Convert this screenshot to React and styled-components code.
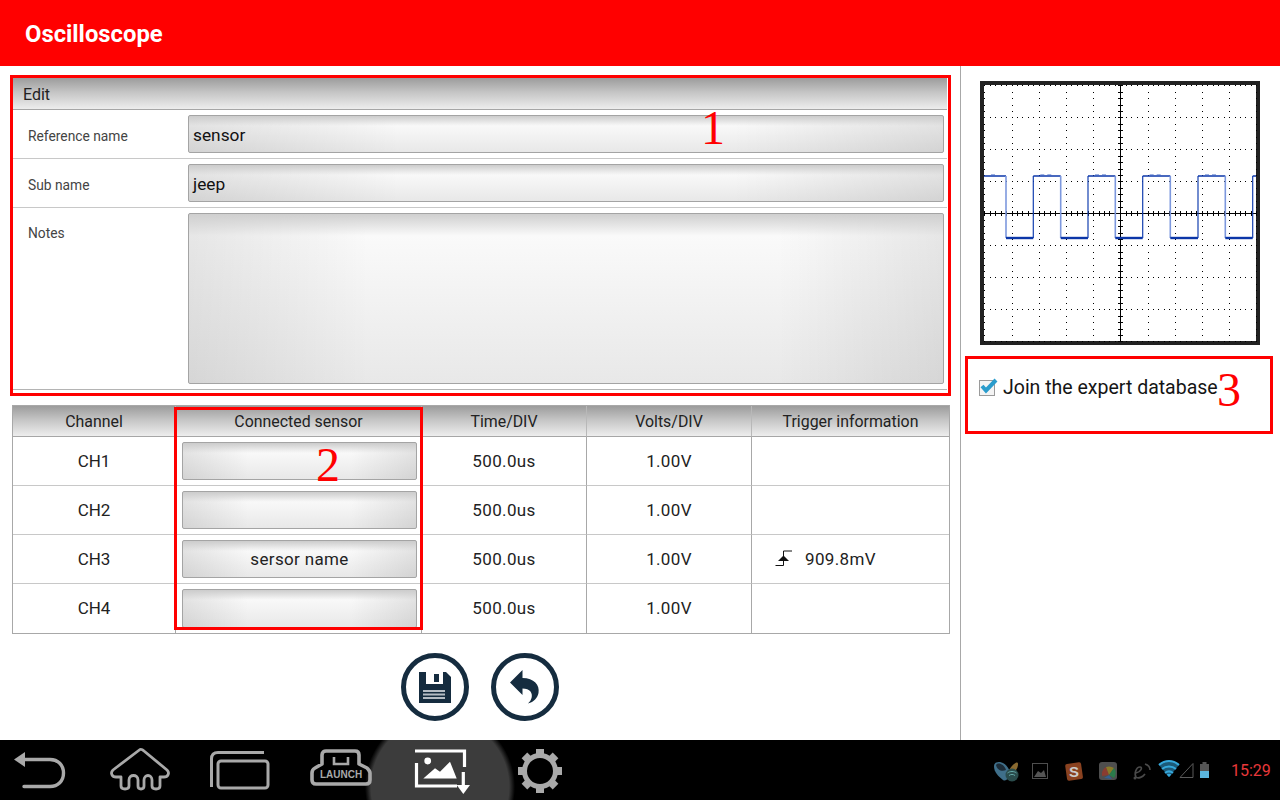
import React from 'react'
import styled, { createGlobalStyle } from 'styled-components'

const Global = createGlobalStyle`
  html, body { margin: 0; padding: 0; background: #fff; }
  body { font-family: Roboto, "Liberation Sans", sans-serif; }
`

const Screen = styled.div`
  position: relative;
  width: 1280px;
  height: 800px;
  display: flex;
  flex-direction: column;
  overflow: hidden;
  background: #fff;
`

const Header = styled.header`
  height: 66px;
  background: #ff0000;
  color: #fff;
  font-size: 23.8px;
  font-weight: 700;
  line-height: 69px;
  padding-left: 25px;
  flex: none;
`

const Main = styled.div`
  flex: 1;
  display: flex;
  min-height: 0;
`

const LeftPane = styled.div`
  box-sizing: border-box;
  padding: 12px 10px 0 12px;
  border-right: 1px solid #a8a8a8;
  flex: none;
  width: 961px;
`

const RightPane = styled.div`
  flex: 1;
  padding: 15px 0 0 19px;
`

const sectionHead = `
  background: linear-gradient(#9c9c9c, #c4c4c4 45%, #ededed);
  color: #222;
`

const EditPanel = styled.section`
  width: 934px;
  margin-left: 1px;
  border-bottom: 1px solid #b4b4b4;
  height: 312px;
  display: flex;
  flex-direction: column;
  box-sizing: border-box;
`

const EditHead = styled.div`
  ${sectionHead}
  height: 32px;
  box-sizing: border-box;
  border-bottom: 1px solid #a6a6a6;
  font-size: 16px;
  line-height: 33px;
  padding-left: 10px;
  flex: none;
`

const FormRow = styled.div`
  display: flex;
  height: ${p => p.$h}px;
  flex: ${p => (p.$grow ? 1 : 'none')};
  box-sizing: border-box;
  padding: 5px 3px 5px 15px;
  border-bottom: ${p => (p.$grow ? 'none' : '1px solid #c8c8c8')};
`

const Label = styled.label`
  width: 160px;
  flex: none;
  font-size: 13.8px;
  color: #444;
  line-height: ${p => (p.$top ? '40px' : '42px')};
`

const Field = styled.div`
  flex: 1;
  box-sizing: border-box;
  border: 1px solid #a4a4a4;
  border-radius: 2px;
  background:
    linear-gradient(#cccccc, rgba(204, 204, 204, 0) 10px),
    linear-gradient(90deg, rgba(0, 0, 0, 0.09), rgba(0, 0, 0, 0) 28%, rgba(0, 0, 0, 0) 72%, rgba(0, 0, 0, 0.09)),
    linear-gradient(#fafafa 20%, #e8e8e8);
  color: #111;
  font-size: 17.3px;
  line-height: 38px;
  padding-left: 4px;
`

const NotesField = styled(Field)`
  background:
    linear-gradient(#cfcfcf, rgba(207, 207, 207, 0) 22px),
    linear-gradient(90deg, rgba(0, 0, 0, 0.08), rgba(0, 0, 0, 0) 24%, rgba(0, 0, 0, 0) 78%, rgba(0, 0, 0, 0.08)),
    linear-gradient(#fafafa 12%, #e8e8e8);
`

const Table = styled.div`
  width: 938px;
  margin-top: 15px;
  box-sizing: border-box;
  border: 1px solid #a8a8a8;
  display: grid;
  grid-template-columns: 163px 246px 165px 165px 1fr;
  color: #222;
`

const HeadCell = styled.div`
  ${sectionHead}
  height: 31px;
  box-sizing: border-box;
  border-bottom: 1px solid #a6a6a6;
  border-right: ${p => (p.$last ? 'none' : '1px solid #b8b8b8')};
  font-size: 15.9px;
  line-height: 31px;
  text-align: center;
`

const Cell = styled.div`
  height: 49px;
  box-sizing: border-box;
  border-bottom: ${p => (p.$end ? 'none' : '1px solid #c8c8c8')};
  border-right: ${p => (p.$last ? 'none' : '1px solid #a8a8a8')};
  font-size: 17px;
  letter-spacing: 0.35px;
  display: flex;
  align-items: center;
  justify-content: ${p => (p.$last ? 'flex-start' : 'center')};
  padding-left: ${p => (p.$last ? '23px' : '0')};
  padding-bottom: 1px;
`

const ChannelCell = styled(Cell)`
  letter-spacing: 0;
`

const SensorCell = styled(Cell)`
  padding: 5px 4px 5px 6px;
  align-items: stretch;
`

const SensorField = styled(Field)`
  font-size: 17px;
  letter-spacing: 0.35px;
  line-height: 36px;
  color: #222;
  text-align: center;
  padding: 0;
`

const TriggerText = styled.span`
  margin-left: 12px;
`

const Actions = styled.div`
  display: flex;
  justify-content: center;
  gap: 22px;
  margin-top: 19px;
  padding-right: 2px;
`

const RoundButton = styled.button`
  width: 68px;
  height: 68px;
  box-sizing: border-box;
  border: 5px solid #152c3f;
  border-radius: 50%;
  background: #fff;
  padding: 0;
  display: flex;
  align-items: center;
  justify-content: center;
`

const Scope = styled.svg`
  display: block;
  width: 280px;
  height: 264px;
`

const JoinRow = styled.div`
  display: flex;
  align-items: center;
  margin-top: 30px;
  margin-left: -2px;
  height: 24px;
  font-size: 19.5px;
  color: #151515;
`

const Check = styled.svg`
  width: 22px;
  height: 22px;
  margin-right: 3px;
  flex: none;
`

const NavBar = styled.nav`
  height: 60px;
  flex: none;
  display: flex;
  align-items: flex-start;
  background:
    radial-gradient(circle 75px at 440px 47px, #3c3c3c 0 69px, rgba(60, 60, 60, 0) 75px),
    #000;
`

const NavIcon = styled.svg`
  display: block;
  flex: none;
  margin-left: ${p => p.$gap}px;
  width: ${p => p.$w}px;
  height: 60px;
`

const Tray = styled.svg`
  display: block;
  flex: none;
  margin-left: 430px;
  width: 220px;
  height: 60px;
`

const Clock = styled.div`
  flex: none;
  margin-left: 17px;
  color: #e8383a;
  font-size: 16px;
  line-height: 61px;
`

const RedBox = styled.div`
  position: absolute;
  box-sizing: border-box;
  border: 3.5px solid #ff0000;
  left: ${p => p.$x}px;
  top: ${p => p.$y}px;
  width: ${p => p.$w}px;
  height: ${p => p.$h}px;
`

const Mark = styled.div`
  position: absolute;
  left: ${p => p.$x}px;
  top: ${p => p.$y}px;
  color: #ff0000;
  font-family: "Liberation Serif", serif;
  font-size: 48px;
  line-height: 50px;
`

const DIVX = 27.2
const DIVY = 32
const CX = 140.3
const CY = 132.3

function ScopeChart() {
  const dots = []
  // dotted graticule, five dots per division
  for (let i = -5; i <= 5; i++) {
    if (i === 0) continue
    for (let j = 0; j <= 40; j++) {
      dots.push([CX + i * DIVX, CY - 128 + j * 6.4])
    }
  }
  for (let i = -4; i <= 4; i++) {
    if (i === 0) continue
    for (let j = 0; j <= 50; j++) {
      dots.push([CX - 136 + j * 5.44, CY + i * DIVY])
    }
  }
  const ticksX = []
  for (let j = 0; j <= 50; j++) ticksX.push(CX - 136 + j * 5.44)
  const ticksY = []
  for (let j = 0; j <= 40; j++) ticksY.push(CY - 128 + j * 6.4)

  const hi = 95
  const lo = 157
  const edges = [26, 53.3, 80.7, 108, 135.3, 162.7, 190.3, 218, 245.3, 272.7]
  const segs = []
  let x0 = 4
  edges.forEach((x, i) => {
    const y = i % 2 === 0 ? hi : lo
    segs.push(<line key={'h' + i} x1={x0} y1={y} x2={x} y2={y} stroke="#0b36a8" strokeWidth={y === lo ? 2.4 : 1.5} />)
    // the flat tops carry a little noise
    if (y === hi) {
      segs.push(<line key={'n' + i} x1={x0 + 7} y1={hi - 1} x2={x - 9} y2={hi - 1} stroke="#3f64c4" strokeWidth="1" strokeDasharray="4 3" />)
    }
    segs.push(
      <line
        key={'v' + i}
        x1={x}
        y1={hi}
        x2={x}
        y2={lo}
        stroke={i % 2 === 0 ? '#7d98de' : '#1440b0'}
        strokeWidth={i % 2 === 0 ? 1.6 : 1.2}
      />
    )
    x0 = x
  })
  segs.push(<line key="tail" x1={x0} y1={hi} x2={276} y2={hi} stroke="#0b36a8" strokeWidth="1.5" />)

  return (
    <Scope viewBox="0 0 280 264">
      <rect x="2" y="2" width="276" height="260" fill="#fff" stroke="#222" strokeWidth="4" />
      {dots.map(([x, y], i) => (
        <rect key={i} x={Math.round(x)} y={Math.round(y)} width="1" height="1" fill="#000" />
      ))}
      <rect x="4" y="132" width="272" height="1" fill="#000" />
      <rect x="140" y="4" width="1" height="256" fill="#000" />
      {ticksX.map(x => (
        <rect key={x} x={Math.round(x)} y="130" width="1" height="5" fill="#000" />
      ))}
      {ticksY.map(y => (
        <rect key={y} x="138" y={Math.round(y)} width="5" height="1" fill="#000" />
      ))}
      {segs}
    </Scope>
  )
}

const rows = [
  { ch: 'CH1', sensor: '' },
  { ch: 'CH2', sensor: '' },
  { ch: 'CH3', sensor: 'sersor name', trigger: '909.8mV' },
  { ch: 'CH4', sensor: '' },
]

function TriggerIcon() {
  return (
    <svg width="18" height="17" viewBox="0 0 18 17">
      <path d="M0.5 15.5H8.5V1H17" fill="none" stroke="#111" strokeWidth="1" />
      <path d="M3 11L8.5 5.5L14 11Z" fill="#111" />
    </svg>
  )
}

function NavIcons() {
  const grey = '#a9a9a9'
  return (
    <>
      <NavIcon $gap={12} $w={56} viewBox="0 0 56 60">
        <path d="M2 19.5L13 12V27Z" fill={grey} />
        <path d="M12 19.5H38C46 19.5 51.5 25 51.5 33S46 46.5 38 46.5H12" fill="none" stroke={grey} strokeWidth="3.4" strokeLinecap="round" />
      </NavIcon>
      <NavIcon $gap={40} $w={64} viewBox="0 0 64 60">
        <path
          d="M32 9.5L5 30C2 33 4 37 8 37H13V46C13 50 21 50 21 46V40C21 34 30 34 30 40V46C30 50 36 50 36 46V40C36 34 44 34 44 40V46C44 50 52 50 52 46V37H56C60 37 62 33 59 30L36 11C34.500 9.500 33.500 9 32 9.500Z"
          fill="none"
          stroke={grey}
          strokeWidth="2.8"
          strokeLinejoin="round"
        />
      </NavIcon>
      <NavIcon $gap={37} $w={62} viewBox="0 0 62 60">
        <path d="M2.500 47V19C2.500 14.500 5 12.500 9 12.500H55" fill="none" stroke={grey} strokeWidth="3" />
        <rect x="9" y="21" width="50" height="27" rx="3" fill="none" stroke={grey} strokeWidth="3" />
      </NavIcon>
      <NavIcon $gap={39} $w={62} viewBox="0 0 62 60">
        <path
          d="M12 24V15C12 12 14 11 16 11H45C48 11 49 13 49 15V24L57 28C59 30 60 31 60 33V40C60 43 58 44 56 44H6C3 44 2 42 2 40V33C2 31 3 29 5 28Z"
          fill="none"
          stroke={grey}
          strokeWidth="3.6"
          strokeLinejoin="round"
        />
        <path d="M24 17V24H38V17" fill="none" stroke={grey} strokeWidth="2.6" />
        <text x="31" y="38" fontFamily="Liberation Sans, sans-serif" fontSize="10" fontWeight="700" textAnchor="middle" fill={grey}>LAUNCH</text>
      </NavIcon>
      <NavIcon $gap={42} $w={58} viewBox="0 0 58 60">
        <path d="M2.500 23V46H43M1 11H50.500V27" fill="none" stroke="#fff" strokeWidth="3.2" />
        <circle cx="13.700" cy="21" r="3.400" fill="#fff" />
        <path d="M9.300 38.500L21 28.300L26 31.700L36 21.700L42.700 38.500Z" fill="#fff" />
        <path d="M49.300 32V46" stroke="#fff" strokeWidth="3.200" />
        <path d="M42.700 45H56L49.300 54Z" fill="#fff" />
      </NavIcon>
      <NavIcon $gap={44} $w={48} viewBox="0 0 48 60">
        <circle cx="24" cy="31" r="15.500" fill="none" stroke={grey} strokeWidth="5" />
        {[0, 45, 90, 135, 180, 225, 270, 315].map(a => (
          <rect key={a} x="20" y="9" width="8" height="7" fill={grey} transform={`rotate(${a} 24 31)`} />
        ))}
      </NavIcon>
    </>
  )
}

function TrayIcons() {
  return (
    <Tray viewBox="0 0 220 60">
      {/* butterfly */}
      <path d="M0 26C0 20 12 20 16 32C15 38 12 42 9 40C4 36 0 32 0 26Z" fill="#3f6f8a" />
      <path d="M2 25C3 22 10 23 12 30C8 32 3 30 2 25Z" fill="#1c2c38" />
      <path d="M14 32C18 24 24 20 24 24C24 30 19 34 15 34Z" fill="#8a6a30" />
      <circle cx="18" cy="35" r="6.500" fill="#2a4c4c" />
      <path d="M13.500 33C16 31 20 31 22.500 33M15 35.500C17 34 19 34 21 35.500" fill="none" stroke="#6aa" strokeWidth="1" />
      {/* picture */}
      <rect x="38.500" y="23.500" width="15" height="15" fill="none" stroke="#4e4e4e" />
      <path d="M40 37L44 31L47 33L50 30L52 37Z" fill="#555" />
      {/* sogou */}
      <rect x="72" y="23" width="16" height="17" rx="2" fill="#8a4220" transform="rotate(-8 80 31)" />
      <text x="80" y="37" fontFamily="Liberation Sans, sans-serif" fontSize="15" fontWeight="700" textAnchor="middle" fill="#ccc">S</text>
      {/* colour wheel */}
      <rect x="105" y="22" width="18" height="18" rx="3" fill="#4e4e4e" />
      <path d="M108 36A9 9 0 0 1 112 27L115 35Z" fill="#8a3c30" />
      <path d="M112 27A9 9 0 0 1 120 28L115 35Z" fill="#8a7a28" />
      <path d="M120 28A9 9 0 0 1 120 38L115 35Z" fill="#2a7a4a" />
      <path d="M110 38L115 35L118 39Z" fill="#335f90" />
      {/* e mark */}
      <path d="M142 33C147 32 149 27 146 27C142 27 140 34 142 37C144 39 149 37 151 34M151 24C154 25 156 27 156 30" fill="none" stroke="#4a4a4a" strokeWidth="1.600" />
      <circle cx="141" cy="38" r="1.500" fill="#4a4a4a" />
      {/* wifi */}
      <path d="M165 25C171 19.500 179 19.500 185 25L175 37Z" fill="#1c5a78" />
      <path d="M165 25C171 19.500 179 19.500 185 25M168 29C172 25.500 178 25.500 182 29M171 33C173.500 31 176.500 31 179 33" fill="none" stroke="#35a8dc" strokeWidth="2" />
      <path d="M172.500 34.500L175 37L177.500 34.500C176 33.500 174 33.500 172.500 34.500Z" fill="#35a8dc" />
      {/* signal */}
      <path d="M186 37.500L199 23.500V37.500Z" fill="none" stroke="#5a5a5a" />
      {/* battery */}
      <rect x="206" y="24" width="9" height="14" fill="#555" />
      <rect x="208.500" y="22" width="4" height="2" fill="#555" />
      <rect x="206" y="31" width="9" height="7" fill="#5cb6de" />
    </Tray>
  )
}

export default function App() {
  return (
    <Screen>
      <Global />
      <Header>Oscilloscope</Header>
      <Main>
        <LeftPane>
          <EditPanel>
            <EditHead>Edit</EditHead>
            <FormRow $h={49}>
              <Label>Reference name</Label>
              <Field>sensor</Field>
            </FormRow>
            <FormRow $h={49}>
              <Label>Sub name</Label>
              <Field>jeep</Field>
            </FormRow>
            <FormRow $grow>
              <Label $top>Notes</Label>
              <NotesField />
            </FormRow>
          </EditPanel>
          <Table>
            <HeadCell>Channel</HeadCell>
            <HeadCell>Connected sensor</HeadCell>
            <HeadCell>Time/DIV</HeadCell>
            <HeadCell>Volts/DIV</HeadCell>
            <HeadCell $last>Trigger information</HeadCell>
            {rows.map((r, i) => {
              const end = i === rows.length - 1
              return (
                <React.Fragment key={r.ch}>
                  <ChannelCell $end={end}>{r.ch}</ChannelCell>
                  <SensorCell $end={end}>
                    <SensorField>{r.sensor}</SensorField>
                  </SensorCell>
                  <Cell $end={end}>500.0us</Cell>
                  <Cell $end={end}>1.00V</Cell>
                  <Cell $end={end} $last>
                    {r.trigger && <TriggerIcon />}
                    {r.trigger && <TriggerText>{r.trigger}</TriggerText>}
                  </Cell>
                </React.Fragment>
              )
            })}
          </Table>
          <Actions>
            <RoundButton aria-label="Save">
              <svg width="32" height="31" viewBox="0 0 32 31">
                <path d="M0 0H27L32 5V31H0Z" fill="#152c3f" />
                <rect x="7" y="0" width="17" height="12" fill="#fff" />
                <rect x="15" y="2" width="5" height="8" fill="#152c3f" />
                <rect x="4" y="18" width="22" height="2" fill="#b4bcc4" />
                <rect x="4" y="21.500" width="22" height="2" fill="#b4bcc4" />
                <rect x="4" y="25" width="22" height="2" fill="#b4bcc4" />
              </svg>
            </RoundButton>
            <RoundButton aria-label="Back">
              <svg width="30" height="34" viewBox="0 0 30 34">
                <path d="M0 12.500L12.500 0V8C24 8 30 15 28.500 23C27.500 28 24 32 18 33.500C22 30 23 25 20.500 21.500C19 19.500 16 18.500 12.500 18.500V25Z" fill="#152c3f" />
              </svg>
            </RoundButton>
          </Actions>
        </LeftPane>
        <RightPane>
          <ScopeChart />
          <JoinRow>
            <Check viewBox="0 0 22 22">
              <rect x="1.500" y="4.500" width="15" height="15" fill="#f4f4f4" stroke="#9a9a9a" />
              <path d="M4 10L8 14.500L18 4" fill="none" stroke="#2a9ccc" strokeWidth="4" />
            </Check>
            Join the expert database
          </JoinRow>
        </RightPane>
      </Main>
      <NavBar>
        <NavIcons />
        <TrayIcons />
        <Clock>15:29</Clock>
      </NavBar>

      <RedBox $x={9.500} $y={74.500} $w={941.500} $h={321} />
      <RedBox $x={174} $y={407} $w={248.500} $h={223} />
      <RedBox $x={965} $y={356} $w={308} $h={78} />
      <Mark $x={701} $y={103}>1</Mark>
      <Mark $x={316} $y={440}>2</Mark>
      <Mark $x={1217} $y={365}>3</Mark>
    </Screen>
  )
}
